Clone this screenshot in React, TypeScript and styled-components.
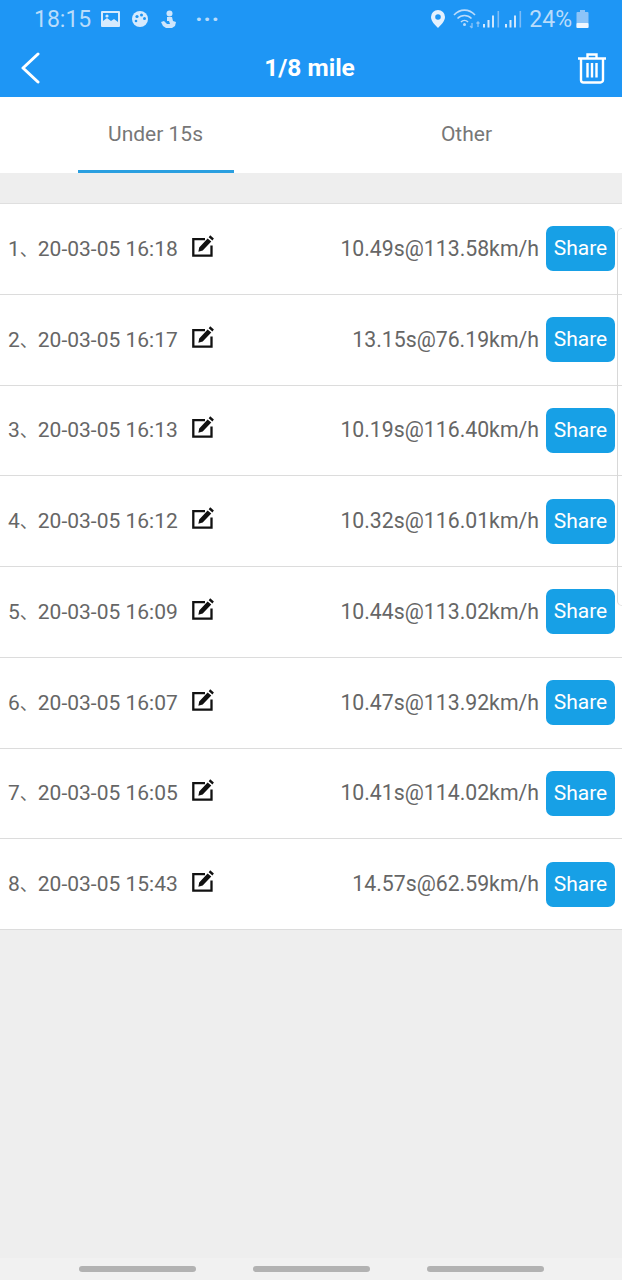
import { createGlobalStyle, styled } from "styled-components";

const GlobalStyle = createGlobalStyle`
  html, body {
    margin: 0;
    padding: 0;
    background: #eeeeee;
    font-family: Roboto, "Liberation Sans", sans-serif;
  }
  * { box-sizing: border-box; }
`;

const records = [
  { date: "20-03-05 16:18", result: "10.49s@113.58km/h" },
  { date: "20-03-05 16:17", result: "13.15s@76.19km/h" },
  { date: "20-03-05 16:13", result: "10.19s@116.40km/h" },
  { date: "20-03-05 16:12", result: "10.32s@116.01km/h" },
  { date: "20-03-05 16:09", result: "10.44s@113.02km/h" },
  { date: "20-03-05 16:07", result: "10.47s@113.92km/h" },
  { date: "20-03-05 16:05", result: "10.41s@114.02km/h" },
  { date: "20-03-05 15:43", result: "14.57s@62.59km/h" },
];

function ImageIcon() {
  return (
    <svg width="19" height="16" viewBox="0 0 19 16">
      <path fill="#d6eafd" fillRule="evenodd" d="M1 0h17a1 1 0 0 1 1 1v14a1 1 0 0 1-1 1H1a1 1 0 0 1-1-1V1a1 1 0 0 1 1-1zm1 2v8l4-3 4 3 3-2 4 3V2z" />
      <circle cx="6" cy="5" r="1.6" fill="#d6eafd" />
    </svg>
  );
}

function PaletteIcon() {
  return (
    <svg width="16" height="16" viewBox="0 0 16 16">
      <circle cx="8" cy="8" r="8" fill="#d6eafd" />
      <circle cx="5" cy="5.5" r="1.6" fill="#1e96f5" />
      <circle cx="9.5" cy="4" r="1.5" fill="#1e96f5" />
      <circle cx="12.5" cy="7.5" r="1.5" fill="#1e96f5" />
      <circle cx="4" cy="10" r="1.3" fill="#1e96f5" />
    </svg>
  );
}

function AnchorIcon() {
  return (
    <svg width="16" height="18" viewBox="0 0 16 18">
      <circle cx="8.5" cy="3.5" r="3" fill="#cfe6fc" />
      <path fill="#cfe6fc" d="M6 7h5l1 4 3 1-1 4-3 2H5l-3-2-2-4 3-1 2 2 1 1h3l-1-3H6z" />
    </svg>
  );
}

function LocationIcon() {
  return (
    <svg width="14" height="18" viewBox="0 0 14 18">
      <path fill="#e4f1fe" fillRule="evenodd" d="M7 0a7 7 0 0 1 7 7c0 4-4 8-7 11-3-3-7-7-7-11a7 7 0 0 1 7-7zm0 4.2a2.8 2.8 0 1 0 0 5.6 2.8 2.8 0 0 0 0-5.6z" />
    </svg>
  );
}

function WifiIcon() {
  return (
    <svg width="28" height="20" viewBox="0 0 28 20" fill="none" stroke="#bcdcfb">
      <path strokeWidth="1.6" d="M1 6c6-6.500 15-6.500 21 0" />
      <path strokeWidth="1.6" d="M4.500 9.500c4-4 10-4 14 0" />
      <path strokeWidth="1.6" d="M8 13c2-2 5-2 7 0" />
      <circle cx="11.500" cy="15.500" r="1.500" fill="#bcdcfb" stroke="none" />
      <path strokeWidth="1.300" d="M19 14v5M17 17l2 2M25 13v5M23.500 14.500l1.500-1.500 1.500 1.500" stroke="#8cc4f8" />
    </svg>
  );
}

function SignalIcon() {
  return (
    <svg width="17" height="18" viewBox="0 0 17 18">
      <rect x="0" y="14" width="2" height="3.500" fill="#d6eafd" />
      <rect x="4.500" y="10" width="2" height="7.500" fill="#d6eafd" />
      <rect x="9" y="5.500" width="2" height="12" fill="#cfe6fc" />
      <rect x="14.500" y="1" width="1.600" height="16.500" fill="#7dbcf7" />
    </svg>
  );
}

function BatteryIcon() {
  return (
    <svg width="13" height="18" viewBox="0 0 13 18">
      <rect x="4" y="0" width="5" height="2" fill="#8cc4f8" />
      <rect x="0.500" y="2" width="12" height="16" rx="1" fill="#8cc4f8" />
      <rect x="0.500" y="13" width="12" height="5" rx="1" fill="#f0f7fe" />
    </svg>
  );
}

function BackIcon() {
  return (
    <svg width="20" height="32" viewBox="0 0 20 32" fill="none">
      <path d="M18 2 3 16l15 14" stroke="#ffffff" strokeWidth="3" strokeLinecap="round" strokeLinejoin="round" />
    </svg>
  );
}

function TrashIcon() {
  return (
    <svg width="30" height="32" viewBox="0 0 30 32" fill="none" stroke="#ffffff" strokeWidth="2.400">
      <path d="M1 6.500h28M10.500 6V2.500h9V6" />
      <path d="M4 6.500V28a2.500 2.500 0 0 0 2.500 2.500h17A2.500 2.500 0 0 0 26 28V6.500" />
      <path d="M10.500 11v14.500M15 11v14.500M19.500 11v14.500" />
    </svg>
  );
}

function EditIcon() {
  return (
    <svg width="22" height="22" viewBox="0 0 22 22">
      <path fill="none" stroke="#111111" strokeWidth="2.300" d="M13 4.200H1.300v16.500h18.200V10.500" />
      <path fill="#111111" d="M18.200 0.300 21.900 3.400 20.400 5.400 16.700 2.300zM15.600 3.500 19.300 6.600 10.700 15.600 6.400 16.800 7.200 12.500z" />
    </svg>
  );
}

export default function App() {
  return (
    <>
      <GlobalStyle />
      <Page>
        <Header>
          <StatusBar>
            <StatusGroup>
              <StatusText>18:15</StatusText>
              <StatusSlot $after={12}>
                <ImageIcon />
              </StatusSlot>
              <StatusSlot $after={13}>
                <PaletteIcon />
              </StatusSlot>
              <StatusSlot $after={18}>
                <AnchorIcon />
              </StatusSlot>
              <Dots>···</Dots>
            </StatusGroup>
            <StatusGroup>
              <StatusSlot $after={8}>
                <LocationIcon />
              </StatusSlot>
              <StatusSlot $after={2}>
                <WifiIcon />
              </StatusSlot>
              <StatusSlot $after={5}>
                <SignalIcon />
              </StatusSlot>
              <StatusSlot $after={7}>
                <SignalIcon />
              </StatusSlot>
              <BatteryText>24%</BatteryText>
              <BatteryIcon />
            </StatusGroup>
          </StatusBar>
          <Toolbar>
            <BackIcon />
            <Title>1/8 mile</Title>
            <TrashIcon />
          </Toolbar>
        </Header>
        <Tabs>
          <Tab $active>Under 15s</Tab>
          <Tab>Other</Tab>
        </Tabs>
        <List>
          {records.map((record, index) => (
            <Row key={record.date}>
              <DateText>
                {index + 1}
                <Separator>、</Separator>
                {record.date}
              </DateText>
              <EditSlot>
                <EditIcon />
              </EditSlot>
              <Result>{record.result}</Result>
              <ShareButton>Share</ShareButton>
            </Row>
          ))}
          <ScrollMark />
        </List>
        <Spacer />
        <NavBar>
          <NavPill />
          <NavPill />
          <NavPill />
        </NavBar>
      </Page>
    </>
  );
}

const Page = styled.div`
  width: 622px;
  height: 1280px;
  display: flex;
  flex-direction: column;
  background: #eeeeee;
  overflow: hidden;
`;

const Header = styled.header`
  height: 97px;
  background: #1e96f5;
`;

const StatusBar = styled.div`
  height: 38px;
  padding: 0 33px 0 34px;
  display: flex;
  justify-content: space-between;
  align-items: center;
`;

const StatusGroup = styled.div`
  display: flex;
  align-items: center;
`;

const StatusSlot = styled.span<{ $after: number }>`
  display: flex;
  margin-right: ${(p) => p.$after}px;
`;

const StatusText = styled.span`
  font-size: 23px;
  color: #b9dcfb;
  margin-right: 10px;
`;

const BatteryText = styled.span`
  font-size: 23px;
  color: #b9dcfb;
  margin-right: 4px;
`;

const Dots = styled.span`
  font-size: 24px;
  font-weight: 700;
  letter-spacing: 1px;
  color: #b9dcfb;
`;

const Toolbar = styled.div`
  height: 59px;
  padding: 0 15px 0 20px;
  display: flex;
  justify-content: space-between;
  align-items: center;
`;

const Title = styled.h1`
  margin: 0 0 0 2px;
  font-size: 24.5px;
  font-weight: 700;
  color: #ffffff;
`;

const Tabs = styled.nav`
  height: 76px;
  background: #ffffff;
  display: grid;
  grid-template-columns: 1fr 1fr;
`;

const Tab = styled.div<{ $active?: boolean }>`
  width: 156px;
  justify-self: center;
  display: flex;
  justify-content: center;
  align-items: center;
  font-size: 21px;
  color: #777777;
  border-bottom: 3px solid ${(p) => (p.$active ? "#2a9fe0" : "transparent")};
`;

const List = styled.section`
  position: relative;
  margin-top: 30px;
  background: #ffffff;
  border-top: 1px solid #dfdfdf;
`;

const Row = styled.div`
  height: 90.75px;
  padding: 0 7px 0 8px;
  display: flex;
  align-items: center;
  border-bottom: 1px solid #dcdcdc;
`;

const DateText = styled.span`
  font-size: 21px;
  line-height: 26px;
  color: #666666;
`;

const Separator = styled.span`
  font-size: 18px;
  line-height: 18px;
  font-family: "Noto Sans CJK SC", sans-serif;
`;

const EditSlot = styled.span`
  display: flex;
  margin: -6px 0 0 14px;
`;

const Result = styled.span`
  margin-left: auto;
  font-size: 21.25px;
  line-height: 26px;
  color: #666666;
`;

const ShareButton = styled.button`
  width: 69px;
  height: 45px;
  margin-left: 7px;
  padding: 0 0 1px;
  border: none;
  border-radius: 7px;
  background: #17a0e6;
  color: #ffffff;
  font-family: inherit;
  font-size: 21px;
`;

const ScrollMark = styled.div`
  position: absolute;
  top: 24px;
  right: 0;
  width: 5px;
  height: 378px;
  border-left: 1px solid #d8d8d8;
  border-top: 1px solid #e4e4e4;
  border-bottom: 1px solid #e4e4e4;
  border-radius: 6px 0 0 6px;
`;

const Spacer = styled.div`
  flex: 1;
`;

const NavBar = styled.div`
  height: 22px;
  background: #f1f1f1;
  display: flex;
  justify-content: center;
  gap: 57px;
  padding-top: 8px;
`;

const NavPill = styled.span`
  width: 117px;
  height: 6px;
  border-radius: 3px;
  background: #b2b2b2;
`;
